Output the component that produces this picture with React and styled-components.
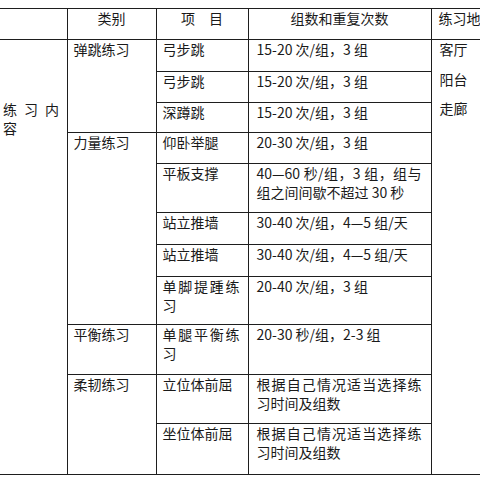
import styled, { createGlobalStyle } from "styled-components";

const Global = createGlobalStyle`
  body {
    margin: 0;
    background: #fff;
  }
`

const Page = styled.div`
  width: 480px;
  height: 480px;
  overflow: hidden;
  padding-top: 8px;
  box-sizing: border-box;
  background: #fff;
`

const Table = styled.table`
  border-collapse: collapse;
  table-layout: fixed;
  width: 539px;
  font-family: "Noto Sans CJK SC", "Noto Sans", sans-serif;
  font-size: 14px;
  line-height: 19px;
  color: #1a1a1a;
`

const Row = styled.tr`
  height: ${(p) => p.h}px;
`

const Cell = styled.td`
  border: 1px solid #1e1e1e;
  vertical-align: top;
  padding: 0 8px 0 6px;
  text-align: justify;
  &:first-child {
    border-left: none;
  }
`

const Plan = styled(Cell)`
  padding: 0 9px 0 8px;
`

const Head = styled(Cell).attrs({ as: "th" })`
  font-weight: normal;
  text-align: ${(p) => (p.left ? "left" : "center")};
  padding: 0 7px;
`

const Side = styled(Cell)`
  padding: 60px 0 0 3px;
  letter-spacing: 7px;
  text-align: left;
  border-left: none;
`

const Places = styled(Cell)`
  padding: 0 8px;
`

const Place = styled.p`
  margin: 0 0 ${(p) => p.gap}px;
`

const rows = [
  { h: 32, cat: "弹跳练习", span: 3, item: "弓步跳", plan: "15-20 次/组，3 组" },
  { h: 31, item: "弓步跳", plan: "15-20 次/组，3 组" },
  { h: 30, item: "深蹲跳", plan: "15-20 次/组，3 组" },
  { h: 31, cat: "力量练习", span: 5, item: "仰卧举腿", plan: "20-30 次/组，3 组" },
  { h: 49, item: "平板支撑", plan: "40—60 秒/组，3 组，组与组之间间歇不超过 30 秒" },
  { h: 32, item: "站立推墙", plan: "30-40 次/组，4—5 组/天" },
  { h: 32, item: "站立推墙", plan: "30-40 次/组，4—5 组/天" },
  { h: 48, item: "单脚提踵练习", plan: "20-40 次/组，3 组" },
  { h: 50, cat: "平衡练习", span: 1, item: "单腿平衡练习", plan: "20-30 秒/组，2-3 组" },
  { h: 49, cat: "柔韧练习", span: 2, item: "立位体前屈", plan: "根据自己情况适当选择练习时间及组数" },
  { h: 51, item: "坐位体前屈", plan: "根据自己情况适当选择练习时间及组数" },
]

export default function App() {
  return (
    <Page>
      <Global />
      <Table>
        <colgroup>
          <col style={{ width: 67 }} />
          <col style={{ width: 89 }} />
          <col style={{ width: 92 }} />
          <col style={{ width: 183 }} />
          <col style={{ width: 108 }} />
        </colgroup>
        <thead>
          <Row h={31}>
            <Head />
            <Head>类别</Head>
            <Head>项{"\u3000"}目</Head>
            <Head>组数和重复次数</Head>
            <Head left>练习地点</Head>
          </Row>
        </thead>
        <tbody>
          {rows.map((r, idx) => (
            <Row h={r.h} key={idx}>
              {idx === 0 && <Side rowSpan={rows.length}>练习内容</Side>}
              {r.cat && <Cell rowSpan={r.span}>{r.cat}</Cell>}
              <Cell>{r.item}</Cell>
              <Plan>{r.plan}</Plan>
              {idx === 0 && (
                <Places rowSpan={rows.length}>
                  <Place gap={11}>客厅</Place>
                  <Place gap={10}>阳台</Place>
                  <Place gap={0}>走廊</Place>
                </Places>
              )}
            </Row>
          ))}
        </tbody>
      </Table>
    </Page>
  )
}
